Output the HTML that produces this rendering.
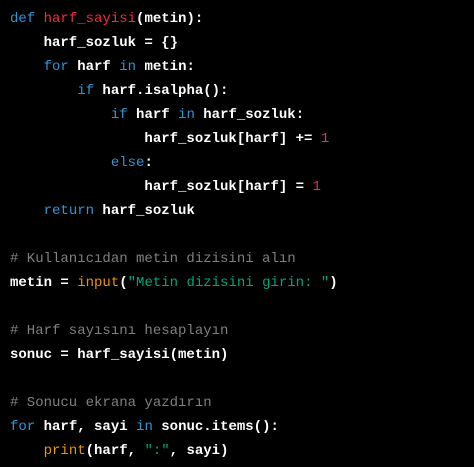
<!DOCTYPE html>
<html><head><meta charset="utf-8"><style>
html,body{margin:0;padding:0;background:#000;width:474px;height:467px;overflow:hidden}
pre{margin:0;padding:7px 0 0 10px;font-family:"Liberation Mono",monospace;font-size:14px;line-height:24px;color:#fff;font-weight:bold}
.k,.f,.n,.s,.b,.c{font-weight:normal}
.k{color:#2e95d3}.f{color:#f22c3d}.n{color:#df3079}.s{color:#00a67d}.b{color:#e9950c}.c{color:#808080}
</style></head><body><pre><span class="k">def</span> <span class="f">harf_sayisi</span>(metin):
    harf_sozluk = {}
    <span class="k">for</span> harf <span class="k">in</span> metin:
        <span class="k">if</span> harf.isalpha():
            <span class="k">if</span> harf <span class="k">in</span> harf_sozluk:
                harf_sozluk[harf] += <span class="n">1</span>
            <span class="k">else</span>:
                harf_sozluk[harf] = <span class="n">1</span>
    <span class="k">return</span> harf_sozluk

<span class="c"># Kullanıcıdan metin dizisini alın</span>
metin = <span class="b">input</span>(<span class="s">"Metin dizisini girin: "</span>)

<span class="c"># Harf sayısını hesaplayın</span>
sonuc = harf_sayisi(metin)

<span class="c"># Sonucu ekrana yazdırın</span>
<span class="k">for</span> harf, sayi <span class="k">in</span> sonuc.items():
    <span class="b">print</span>(harf, <span class="s">":"</span>, sayi)
</pre></body></html>
